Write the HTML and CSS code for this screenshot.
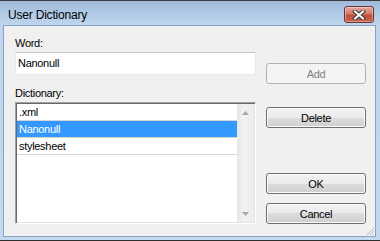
FILE: index.html
```html
<!DOCTYPE html>
<html>

<head>
    <meta charset="UTF-8">
    <title>User Dictionary</title>
    <link rel="stylesheet" href="styles.css">
</head>

<body>
    <!-- Ventana del diccionario -->
    <div class="window">
        <div class="titlebar">
            <span class="title">User Dictionary</span>
            <div class="close">
                <svg width="14" height="10" viewBox="0 0 14 10">
                    <path d="M3 1.5 L11 8.5 M11 1.5 L3 8.5" stroke="#3a3a3a" stroke-width="4" stroke-linecap="square" fill="none"/>
                    <path d="M3 1.5 L11 8.5 M11 1.5 L3 8.5" stroke="#ffffff" stroke-width="2" stroke-linecap="square" fill="none"/>
                </svg>
            </div>
        </div>

        <div class="client">
            <!-- Columna izquierda -->
            <div class="left">
                <div class="label">Word:</div>
                <div class="textbox">Nanonull</div>
                <div class="label dict-label">Dictionary:</div>
                <div class="listbox">
                    <ul class="items">
                        <li>.xml</li>
                        <li class="selected">Nanonull</li>
                        <li>stylesheet</li>
                    </ul>
                    <div class="scrollbar">
                        <div class="arrow">
                            <svg width="7" height="4" viewBox="0 0 7 4"><path d="M0 4 L3.5 0 L7 4 Z" fill="#a8a8a8"/></svg>
                        </div>
                        <div class="arrow">
                            <svg width="7" height="4" viewBox="0 0 7 4"><path d="M0 0 L3.5 4 L7 0 Z" fill="#a8a8a8"/></svg>
                        </div>
                    </div>
                </div>
            </div>

            <!-- Botones -->
            <div class="right">
                <button class="btn add" disabled>Add</button>
                <button class="btn delete">Delete</button>
                <button class="btn ok">OK</button>
                <button class="btn cancel">Cancel</button>
            </div>

            <svg class="grip" width="10" height="10" viewBox="0 0 10 10">
                <rect x="8" y="2" width="1" height="1" fill="#b8b8b8"/>
                <rect x="7" y="3" width="1" height="1" fill="#b8b8b8"/>
                <rect x="6" y="4" width="1" height="1" fill="#b8b8b8"/>
                <rect x="5" y="5" width="1" height="1" fill="#b8b8b8"/>
                <rect x="4" y="6" width="1" height="1" fill="#b8b8b8"/>
                <rect x="3" y="7" width="1" height="1" fill="#b8b8b8"/>
                <rect x="2" y="8" width="1" height="1" fill="#b8b8b8"/>
                <rect x="8" y="5" width="1" height="1" fill="#b8b8b8"/>
                <rect x="7" y="6" width="1" height="1" fill="#b8b8b8"/>
                <rect x="6" y="7" width="1" height="1" fill="#b8b8b8"/>
                <rect x="5" y="8" width="1" height="1" fill="#b8b8b8"/>
                <rect x="8" y="8" width="1" height="1" fill="#b8b8b8"/>
            </svg>
        </div>
    </div>
</body>

</html>
```

FILE: styles.css
```css
* {
    box-sizing: border-box;
}

body {
    margin: 0;
    font-family: "Liberation Sans", Arial, sans-serif;
    font-size: 11px;
}

.window {
    width: 380px;
    height: 241px;
    padding: 0 4px 3px 3px;
    border-top: 1px solid #3c3c3c;
    border-bottom: 1px solid #2e2e2e;
    background: linear-gradient(#9fbad9 0px, #b3cbe6 14px, #bfd5ee 24px, #c3d9f0 100%);
    display: flex;
    flex-direction: column;
}

.titlebar {
    height: 24px;
    display: flex;
    justify-content: space-between;
    align-items: flex-start;
}

.title {
    padding: 7px 0 0 5px;
    font-size: 12px;
    letter-spacing: -0.2px;
    color: #000;
}

.close {
    width: 30px;
    height: 17px;
    margin: 5px 2px 0 0;
    border: 1px solid #6b3434;
    border-radius: 3px;
    background: linear-gradient(#e5a89e 0%, #d47a6b 45%, #c0503e 55%, #c9604c 100%);
    box-shadow: inset 0 0 0 1px rgba(255, 255, 255, 0.35);
    display: flex;
    align-items: center;
    justify-content: center;
}

.client {
    position: relative;
    flex: 1;
    border: 1px solid #88a2c2;
    background-color: #f0f0f0;
    padding: 10px 9px 12px 11px;
    display: flex;
    gap: 10px;
}

.left {
    width: 241px;
    display: flex;
    flex-direction: column;
}

.label {
    line-height: 14px;
    letter-spacing: -0.3px;
    color: #000;
}

.dict-label {
    margin-top: 11px;
}

.textbox {
    margin-top: 2px;
    height: 23px;
    border: 1px solid #e3e9ef;
    border-top-color: #c5cad1;
    background-color: #fff;
    padding: 0 2px;
    line-height: 21px;
    letter-spacing: -0.3px;
}

.listbox {
    margin-top: 2px;
    flex: 1;
    display: flex;
    border: 1px solid;
    border-color: #a0a0a0 #ffffff #ffffff #a0a0a0;
    box-shadow: inset 1px 1px 0 #696969, inset -1px -1px 0 #e3e3e3;
    background-color: #fff;
    padding: 1px 1px 1px 1px;
}

.items {
    flex: 1;
    list-style: none;
    margin: 0;
    padding: 0 0 0 0;
}

.items li {
    height: 17px;
    line-height: 16px;
    padding-left: 2px;
    border-bottom: 1px solid #d4d4d4;
    letter-spacing: -0.3px;
}

.items li.selected {
    background-color: #3399ff;
    color: #fff;
}

.scrollbar {
    width: 17px;
    background: linear-gradient(to right, #e6e6e6, #f2f2f2 40%, #ececec);
    display: flex;
    flex-direction: column;
    justify-content: space-between;
}

.arrow {
    height: 17px;
    display: flex;
    align-items: center;
    justify-content: center;
}

.right {
    width: 100px;
    display: flex;
    flex-direction: column;
}

.btn {
    height: 21px;
    width: 100px;
    padding: 0;
    border: 1px solid #707070;
    border-radius: 3px;
    background: linear-gradient(#f2f2f2 0%, #ebebeb 50%, #dddddd 50%, #cfcfcf 100%);
    box-shadow: inset 0 0 0 1px #fbfbfb;
    font-family: "Liberation Sans", Arial, sans-serif;
    font-size: 11px;
    letter-spacing: -0.3px;
    color: #000;
}

.btn.add {
    margin-top: 27px;
    border-color: #adb2b5;
    background: #f4f4f4;
    box-shadow: none;
    color: #838383;
}

.btn.delete {
    margin-top: 23px;
}

.btn.ok {
    margin-top: auto;
}

.btn.cancel {
    margin-top: 9px;
}

.grip {
    position: absolute;
    right: 0;
    bottom: 0;
}
```
